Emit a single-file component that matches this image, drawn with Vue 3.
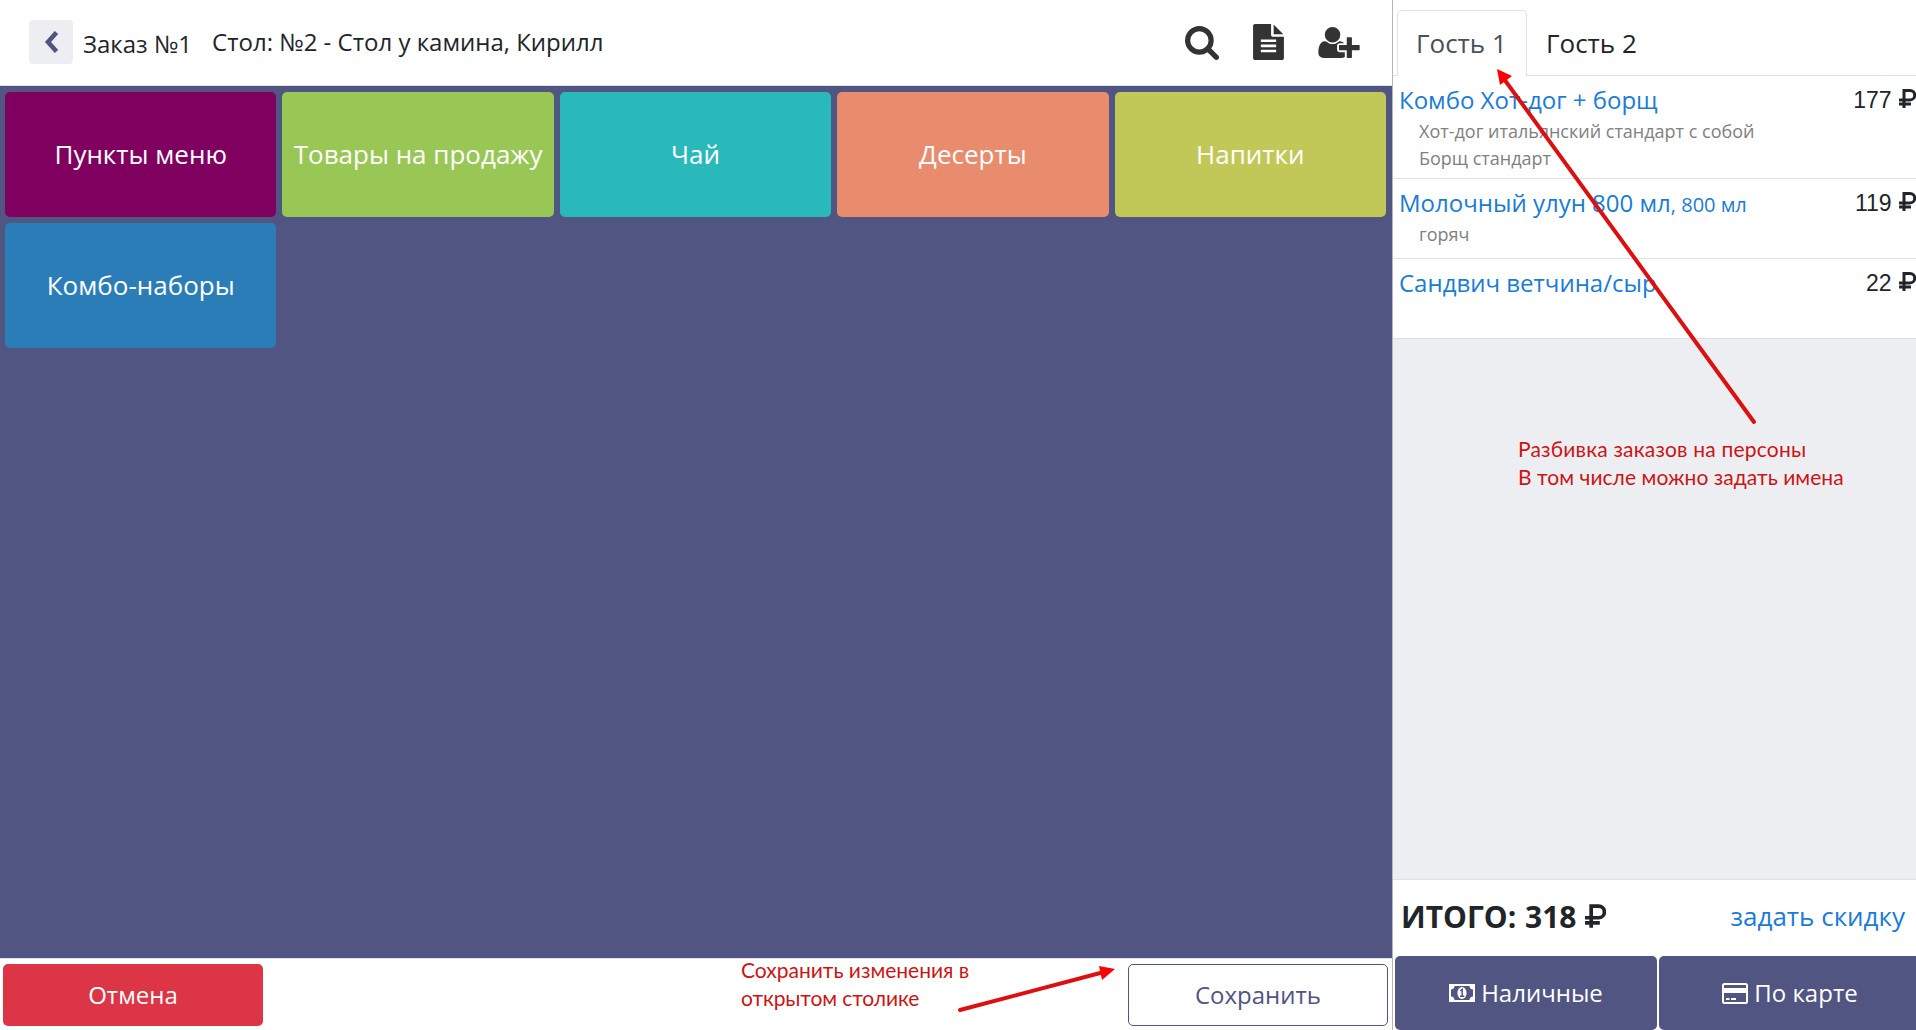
<script setup>
const tiles = [
  { name: 'Пункты меню', color: '#7f005f' },
  { name: 'Товары на продажу', color: '#99c755' },
  { name: 'Чай', color: '#2ab9bb' },
  { name: 'Десерты', color: '#e98b6d' },
  { name: 'Напитки', color: '#c1c858' },
  { name: 'Комбо-наборы', color: '#2b7db8' },
]
const items = [
  { name: 'Комбо Хот-дог + борщ', price: 177, notes: ['Хот-дог итальянский стандарт с собой', 'Борщ стандарт'] },
  { name: 'Молочный улун 800 мл', size: ', 800 мл', price: 119, notes: ['горяч'] },
  { name: 'Сандвич ветчина/сыр', price: 22, notes: [] },
]
</script>

<template>
  <div class="app">
    <main class="left">
      <header class="top">
        <button class="back">
          <svg width="15" height="22" viewBox="0 0 15 22"><path d="M12.500 1.500 4 11l8.500 9.500" fill="none" stroke="#50547f" stroke-width="4.600" /></svg>
        </button>
        <span class="order">Заказ №1</span>
        <span class="table">Стол: №2 - Стол у камина, Кирилл</span>
        <nav class="tools">
          <svg class="i-search" viewBox="0 128 1664 1664"><path d="M1152 832q0-185-131.500-316.500t-316.500-131.500-316.500 131.500-131.500 316.500 131.500 316.500 316.500 131.500 316.500-131.500 131.500-316.500zm512 832q0 52-38 90t-90 38q-54 0-90-38l-343-342q-179 124-399 124-143 0-273.500-55.500t-225-150-150-225-55.500-273.500 55.500-273.500 150-225 225-150 273.500-55.500 273.500 55.500 225 150 150 225 55.500 273.500q0 220-124 399l343 343q37 37 37 90z" /></svg>
          <svg class="i-file" viewBox="128 0 1536 1792"><path d="M1596 476q14 14 28 36h-472v-472q22 14 36 28zm-476 164h544v1056q0 40-28 68t-68 28h-1344q-40 0-68-28t-28-68v-1600q0-40 28-68t68-28h800v544q0 40 28 68t68 28zm160 736v-64q0-14-9-23t-23-9h-704q-14 0-23 9t-9 23v64q0 14 9 23t23 9h704q14 0 23-9t9-23zm0-256v-64q0-14-9-23t-23-9h-704q-14 0-23 9t-9 23v64q0 14 9 23t23 9h704q14 0 23-9t9-23zm0-256v-64q0-14-9-23t-23-9h-704q-14 0-23 9t-9 23v64q0 14 9 23t23 9h704q14 0 23-9t9-23z" /></svg>
          <svg class="i-user" viewBox="0 128 2048 1536"><path d="M704 896q-159 0-271.500-112.500t-112.500-271.500 112.500-271.500 271.500-112.500 271.500 112.500 112.500 271.500-112.500 271.500-271.500 112.500zm960 128h352q13 0 22.500 9.500t9.500 22.500v192q0 13-9.500 22.500t-22.500 9.500h-352v352q0 13-9.500 22.500t-22.500 9.500h-192q-13 0-22.500-9.500t-9.500-22.500v-352h-352q-13 0-22.500-9.500t-9.500-22.500v-192q0-13 9.500-22.500t22.500-9.500h352v-352q0-13 9.500-22.500t22.500-9.500h192q13 0 22.500 9.500t9.500 22.500v352zm-736 224q0 52 38 90t90 38h256v238q-68 50-171 50h-874q-121 0-194-69t-73-190q0-53 3.500-103.500t14-109 26.500-108.500 43-97.500 62-81 85.500-53.500 111.500-20q19 0 39 17 79 61 154.500 91.500t164.500 30.500 164.500-30.500 154.500-91.500q20-17 39-17 132 0 217 96h-223q-52 0-90 38t-38 90v192z" /></svg>
        </nav>
      </header>
      <section class="grid">
        <button v-for="t in tiles" :key="t.name" class="tile" :style="{ background: t.color }">{{ t.name }}</button>
      </section>
      <footer class="actions">
        <button class="cancel">Отмена</button>
        <button class="save">Сохранить</button>
      </footer>
    </main>

    <aside class="right">
      <div class="tabs">
        <div class="tab active">Гость 1</div>
        <div class="tab">Гость 2</div>
      </div>
      <div class="list">
        <div v-for="it in items" :key="it.name" class="item">
          <div class="line">
            <span class="name">{{ it.name }}<small v-if="it.size">{{ it.size }}</small></span>
            <span class="price">{{ it.price }}
              <svg class="rub" viewBox="0 0 17 19"><path d="M5 19V1.500h6a4.700 4.700 0 0 1 0 9.400H0M0 15.100h12" /></svg>
            </span>
          </div>
          <div v-for="n in it.notes" :key="n" class="note">{{ n }}</div>
        </div>
      </div>
      <div class="total">
        <strong>ИТОГО: 318 <svg class="rub big" viewBox="0 0 17 19"><path d="M5 19V1.500h6a4.700 4.700 0 0 1 0 9.400H0M0 15.100h12" /></svg></strong>
        <a>задать скидку</a>
      </div>
      <div class="pay">
        <button>
          <svg width="26" height="18" viewBox="0 0 26 18"><path fill-rule="evenodd" fill="#fff" d="M0 0h26v18H0zM5.500 2A3.700 3.700 0 0 1 2 5.500v7A3.700 3.700 0 0 1 5.500 16h15a3.700 3.700 0 0 1 3.500-3.500v-7A3.700 3.700 0 0 1 20.500 2z" /><ellipse cx="13" cy="9" rx="4.600" ry="5.900" fill="#fff" /><path d="M11.300 6.800 13.200 5.500v6.600M11 12.300h4.300" stroke="#50547f" stroke-width="1.500" fill="none" /></svg>
          <span>Наличные</span>
        </button>
        <button>
          <svg width="26" height="21" viewBox="0 0 26 21"><rect x="1" y="1" width="24" height="19" rx="1.500" fill="none" stroke="#fff" stroke-width="2" /><path d="M1 5h24v5H1zM4 15h3.500v2H4zM9 15h5v2H9z" fill="#fff" /></svg>
          <span>По карте</span>
        </button>
      </div>
    </aside>

    <svg class="arrows" width="1916" height="1030" viewBox="0 0 1916 1030">
      <path d="M1754 422 1504 79M960 1010 1104 972" />
      <polygon points="1497,69 1512,76 1500,85" />
      <polygon points="1115,969 1102,980 1099,966" />
    </svg>
    <div class="callout guests"><span class="wide">Разбивка заказов на персоны</span><br /><span class="even">В том числе можно задать имена</span></div>
    <div class="callout keep"><span>Сохранить изменения в</span><br /><span class="tight">открытом столике</span></div>
  </div>
</template>

<style>
body { overflow: hidden; }
</style>

<style scoped>
* { box-sizing: border-box; }
.app { position: relative; display: flex; width: 1916px; height: 1030px; overflow: hidden; background: #fff; color: #212529; font: 25px/36px "Open Sans", "Noto Sans", sans-serif; }
button { border: 0; padding: 0; font: inherit; color: #fff; white-space: nowrap; }
.left { width: 1392px; display: flex; flex-direction: column; }
.top { height: 86px; display: flex; align-items: center; padding: 0 32px 0 29px; border-bottom: 1px solid #dee2e6; }
.back { width: 44px; height: 44px; border-radius: 4px; background: #edeef2; display: flex; align-items: center; justify-content: center; margin-top: -1px; }
.order { margin: 2px 0 0 10px; font-size: 24px; white-space: nowrap; }
.table { margin: -1px 0 0 20px; font-size: 24px; white-space: nowrap; }
.tools { margin-left: auto; display: flex; align-items: center; fill: #333; }
.i-search { width: 34px; height: 34px; margin-right: 34px; }
.i-file { width: 31px; height: 36px; margin-right: 34px; margin-top: -2px; }
.i-user { width: 42px; height: 31px; margin-top: -1px; }
.grid { flex: 1; background: #515581; padding: 6px 6px 6px 5px; display: grid; grid-template-columns: repeat(5, 1fr); grid-auto-rows: 125px; gap: 6px; align-content: start; }
.tile { border-radius: 5px; font-size: 26px; padding-bottom: 2px; }
.actions { height: 72px; border-top: 1px solid #dee2e6; padding: 5px 4px 4px 3px; display: flex; justify-content: space-between; }
.actions button { width: 260px; height: 62px; border-radius: 5px; font-size: 24px; }
.cancel { background: #dc3546; }
.actions .save { background: #fff; border: 1px solid #515581; color: #515581; }
.right { flex: 1; min-width: 0; display: flex; flex-direction: column; border-left: 1px solid #b5b5ba; background: #edeef2; }
.tabs { height: 76px; background: #fff; border-bottom: 1px solid #dee2e6; padding: 10px 0 0 4px; display: flex; }
.tab { padding: 14px 18px 0; height: 66px; border: 1px solid transparent; border-bottom: 0; font-size: 26px; white-space: nowrap; }
.active { width: 130px; height: 67px; background: #fff; color: #495057; border-color: #dee2e6; border-radius: 5px 5px 0 0; }
.list { background: #fff; }
.item { min-height: 80px; border-bottom: 1px solid #dee2e6; padding: 6px 0 6px 6px; }
.line { display: flex; justify-content: space-between; height: 36px; line-height: 36px; white-space: nowrap; }
.name { color: #1a7cd6; font-size: 24px; }
.name small { font-size: 20px; }
.price { font: 23px/37px "Liberation Sans", sans-serif; word-spacing: 1px; }
.rub { width: 17px; height: 19px; fill: none; stroke: #212529; stroke-width: 3; }
.note { color: #808080; font-size: 18px; line-height: 27px; padding-left: 20px; white-space: nowrap; }
.total { margin-top: auto; height: 77px; background: #fff; border-top: 1px solid #dee2e6; padding: 0 11px 2px 8px; display: flex; align-items: center; justify-content: space-between; white-space: nowrap; }
.total strong { font-size: 30px; word-spacing: 1px; }
.total a { color: #1a7cd6; font-size: 26px; padding-bottom: 2px; }
.rub.big { width: 21px; height: 24px; }
.pay { height: 74px; background: #fff; display: flex; gap: 2px; padding-left: 2px; overflow: hidden; }
.pay button { flex: 0 0 262px; background: #515581; border-radius: 5px; display: flex; align-items: center; justify-content: center; gap: 6px; font-size: 24px; }
.arrows { position: absolute; inset: 0; fill: #f00; }
.arrows path { stroke: #dc1010; stroke-width: 4; stroke-linecap: round; }
.callout { position: absolute; font: 21px/28px Lato, "Open Sans", sans-serif; color: #cb1515; white-space: nowrap; }
.wide { letter-spacing: 0.2px; }
.even { letter-spacing: 0.05px; }
.tight { letter-spacing: -0.1px; }
.guests { left: 1518px; top: 435px; }
.keep { left: 741px; top: 956px; }
</style>
